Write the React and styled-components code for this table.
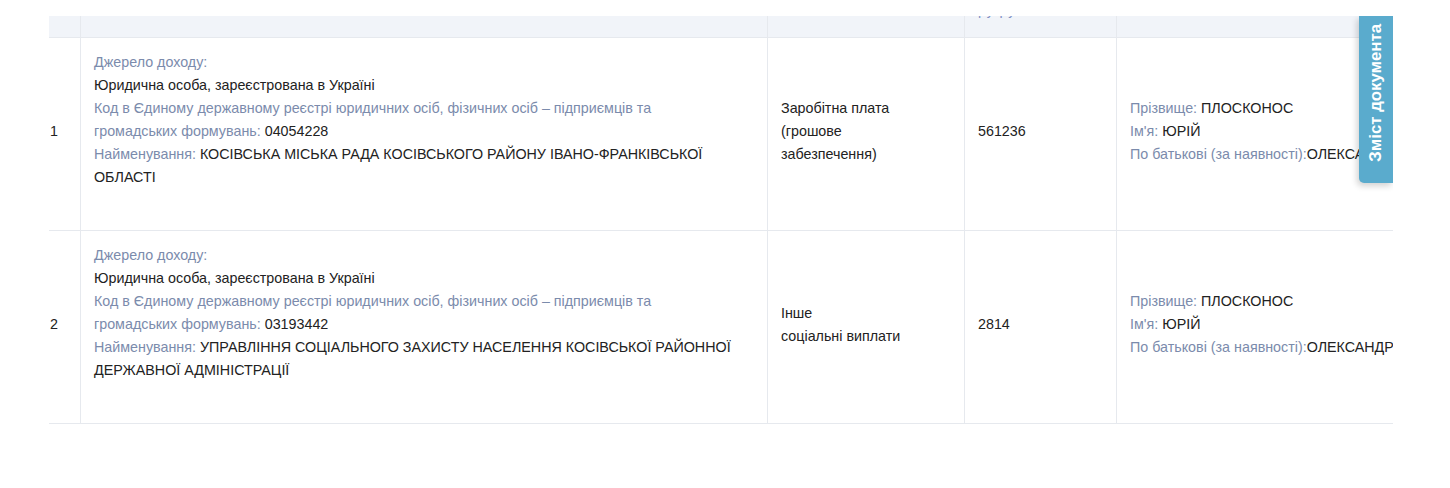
import styled, { createGlobalStyle } from 'styled-components'

const GlobalStyle = createGlobalStyle`
  body {
    margin: 0;
    background: #fff;
    font-family: "Liberation Sans", Arial, "Noto Sans", sans-serif;
  }
`

const rows = [
  {
    n: 1,
    code: '04054228',
    name: 'КОСІВСЬКА МІСЬКА РАДА КОСІВСЬКОГО РАЙОНУ ІВАНО-ФРАНКІВСЬКОЇ ОБЛАСТІ',
    kind: ['Заробітна плата', '(грошове', 'забезпечення)'],
    amount: '561236'
  },
  {
    n: 2,
    code: '03193442',
    name: 'УПРАВЛІННЯ СОЦІАЛЬНОГО ЗАХИСТУ НАСЕЛЕННЯ КОСІВСЬКОЇ РАЙОННОЇ ДЕРЖАВНОЇ АДМІНІСТРАЦІЇ',
    kind: ['Інше', 'соціальні виплати'],
    amount: '2814'
  }
]

const Page = styled.div`
  padding: 16px 0 0 49px;
`

const Viewport = styled.div`
  position: relative;
  width: 1344px;
  overflow: hidden;
`

const Table = styled.div`
  display: grid;
  grid-template-columns: 31px 687px 197px 152px 320px;
  width: 1387px;
  font-size: 14.3px;
  line-height: 23px;
  color: #222;
`

const HeadCell = styled.div`
  height: 21px;
  background: #f1f4f9;
  border-bottom: 1px solid #e6e9ee;
  border-left: ${p => (p.$first ? 'none' : '1px solid #e6e9ee')};
  padding: 0 13px;
  overflow: hidden;
`

const Descenders = styled.div`
  height: 2px;
  overflow: hidden;
  color: #7f8fc4;
  font-size: 14px;
  line-height: 16px;
  & > span {
    display: block;
    margin-top: -14px;
    letter-spacing: 1px;
  }
`

const Cell = styled.div`
  display: flex;
  flex-direction: column;
  justify-content: center;
  padding: ${p => p.$pad || '12px 13px 17px'};
  border-bottom: 1px solid #e6e9ee;
  border-left: ${p => (p.$first ? 'none' : '1px solid #e6e9ee')};
  min-height: 163px;
`

const Source = styled.div`
  margin-bottom: 23px;
`

const Label = styled.span`
  color: #7b8bac;
`

const Line = styled.div`
  white-space: ${p => (p.$nowrap ? 'nowrap' : 'normal')};
`

const Tab = styled.div`
  position: absolute;
  top: 0;
  right: 0;
  width: 34px;
  height: 167px;
  padding-bottom: 14px;
  box-sizing: border-box;
  background: #5aabcd;
  border-bottom-left-radius: 5px;
  box-shadow: -2px 3px 6px rgba(0, 0, 0, 0.18);
  display: flex;
  align-items: center;
  justify-content: center;
`

const TabText = styled.span`
  writing-mode: vertical-rl;
  transform: rotate(180deg);
  color: #fff;
  font-weight: bold;
  font-size: 16.8px;
  white-space: nowrap;
`

const Row = ({ r }) => (
  <>
    <Cell $first $pad="12px 0 17px 1px">{r.n}</Cell>
    <Cell $pad="12px 33px 17px 13px">
      <Source>
        <Line><Label>Джерело доходу:</Label></Line>
        <Line>Юридична особа, зареєстрована в Україні</Line>
        <Line>
          <Label>Код в Єдиному державному реєстрі юридичних осіб, фізичних осіб – підприємців та громадських формувань: </Label>
          {r.code}
        </Line>
        <Line>
          <Label>Найменування: </Label>
          {r.name}
        </Line>
      </Source>
    </Cell>
    <Cell>
      {r.kind.map((k, i) => <Line key={i}>{k}</Line>)}
    </Cell>
    <Cell>{r.amount}</Cell>
    <Cell>
      <Line $nowrap><Label>Прізвище: </Label>ПЛОСКОНОС</Line>
      <Line $nowrap><Label>Ім'я: </Label>ЮРІЙ</Line>
      <Line $nowrap><Label>По батькові (за наявності):</Label>ОЛЕКСАНДРОВИЧ</Line>
    </Cell>
  </>
)

export default function App() {
  return (
    <Page>
      <GlobalStyle />
      <Viewport>
        <Table>
          <HeadCell $first />
          <HeadCell />
          <HeadCell />
          <HeadCell>
            <Descenders><span>ру ру</span></Descenders>
          </HeadCell>
          <HeadCell />
          {rows.map(r => <Row key={r.n} r={r} />)}
        </Table>
        <Tab>
          <TabText>Зміст документа</TabText>
        </Tab>
      </Viewport>
    </Page>
  )
}
